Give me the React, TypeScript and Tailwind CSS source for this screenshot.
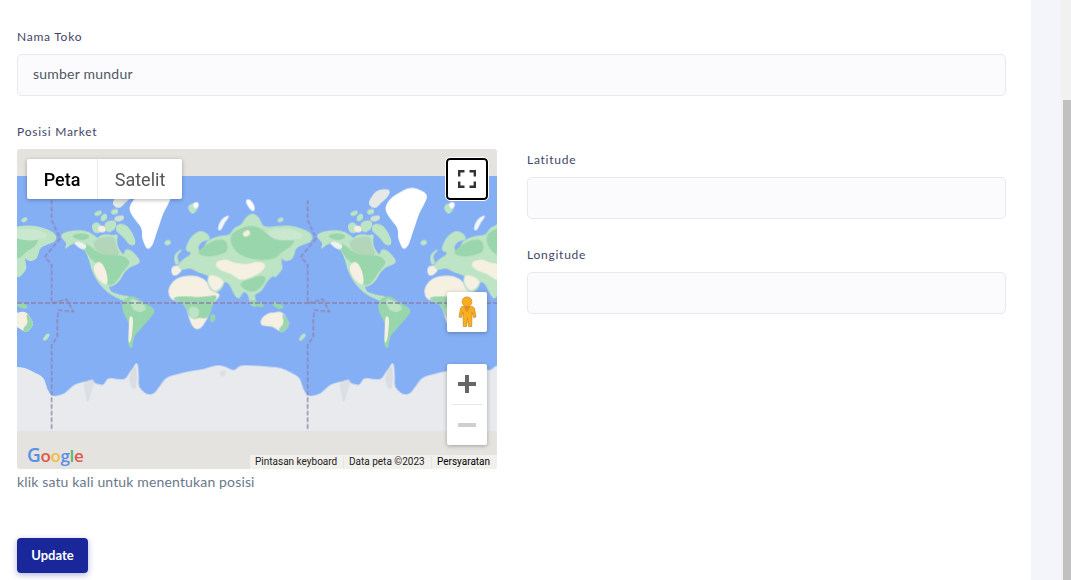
const LAND = "#bde4c5";
const FOREST = "#9ad6ab";
const SAND = "#f5f0e2";
const ICE = "#e8eaed";

// coastlines are noted on a 768 unit tile (3 units = 1 screen px), rounded by blob()
function blob(points: string) {
  const p = points.split(" ").map((s) => s.split(",").map(Number));
  const mid = (a: number[], b: number[]) => `${(a[0] + b[0]) / 2} ${(a[1] + b[1]) / 2}`;
  let d = `M${mid(p[p.length - 1], p[0])}`;
  p.forEach((pt, i) => {
    d += `Q${pt[0]} ${pt[1]} ${mid(pt, p[(i + 1) % p.length])}`;
  });
  return d + "Z";
}

type Shape = [string, string];

const AMERICAS: Shape[] = [
  [LAND, "30,178 45,170 60,166 85,164 105,166 125,176 140,190 150,178 168,176 185,180 200,176 196,192 198,212 210,232 220,238 224,220 240,224 255,240 268,258 252,266 236,272 222,284 212,300 204,314 190,326 178,330 170,332 180,350 196,354 212,360 238,362 226,374 206,368 180,354 160,338 146,322 132,300 122,276 116,250 104,222 88,208 70,200 56,206 42,218 50,202 38,190"],
  ["#b3d6bb", "128,196 160,184 190,184 192,208 206,236 178,240 150,232 132,216"],
  [FOREST, "88,206 112,206 130,226 160,240 200,238 226,246 236,262 216,280 202,306 188,322 170,328 168,296 140,262 120,248 106,224"],
  [FOREST, "60,178 100,172 118,184 84,192"],
  [SAND, "128,270 146,256 160,276 168,304 168,326 150,316 134,296"],
  ["#eff3f0", "70,200 84,198 106,208 100,220 84,214"],
  [FOREST, "196,268 226,260 226,274 204,296"],
  [LAND, "122,150 136,138 150,150 152,166 132,172"],
  [SAND, "140,152 162,150 164,166 146,168"],
  [LAND, "150,122 164,112 168,128 152,136"],
  [LAND, "130,112 148,104 152,112 136,120"],
  [LAND, "180,106 196,98 202,110 186,116"],
  [LAND, "198,148 214,144 232,154 250,186 252,206 236,206 222,186 206,172 196,164"],
  [LAND, "160,142 180,134 196,138 190,160 168,170"],
  ["#e4e9e5", "184,84 196,62 208,46 232,40 250,44 238,66 222,78 204,98"],
  ["#ffffff", "236,104 240,84 258,62 282,50 306,36 332,40 362,56 350,84 334,112 322,150 312,178 304,206 290,220 282,204 274,182 276,156 258,136"],
  ["#cfe3d4", "190,124 218,118 216,132 194,136"],
  [LAND, "340,198 354,192 360,202 346,208"],
  [FOREST, "218,374 232,364 250,362 262,372 286,386 312,402 302,418 288,434 272,452 262,464 250,476 244,494 242,518 232,504 236,470 236,440 224,420 214,396"],
  [LAND, "236,366 262,378 288,396 270,408 246,400"],
  [SAND, "237,420 245,426 243,460 238,496 234,498 235,460"],
];

const EURASIA: Shape[] = [
  [SAND, "-28,282 -24,272 -2,270 2,282 -12,296 -24,298"],
  [LAND, "-6,262 12,248 32,236 30,226 14,224 22,198 38,176 58,165 80,174 86,190 72,192 60,196 48,214 56,230 70,216 76,198 100,186 124,180 140,180 152,172 162,154 182,150 194,126 214,112 234,124 242,150 262,156 300,150 342,152 392,172 392,196 364,204 342,216 336,246 320,254 304,250 296,236 292,226 304,268 288,272 276,298 264,306 252,324 238,348 218,354 222,374 230,392 208,386 204,354 186,342 174,370 160,354 148,324 130,312 122,338 96,354 78,316 86,298 66,292 48,286 28,274 2,280 -6,274"],
  [FOREST, "48,232 74,208 104,194 134,192 140,226 110,236 78,240"],
  [FOREST, "146,180 176,160 206,150 236,156 268,186 300,176 340,180 334,208 300,226 282,248 236,250 196,244 160,222"],
  ["#c9e8cf", "254,166 300,158 350,164 372,184 330,192 280,190"],
  [SAND, "100,262 132,250 158,262 196,268 228,258 254,264 244,284 208,304 176,312 150,290 120,284"],
  [SAND, "86,298 108,302 128,316 118,334 98,346 82,316"],
  [FOREST, "176,322 204,312 244,298 254,310 238,334 214,348 190,338"],
  [SAND, "186,170 204,162 206,176 190,182"],
  [LAND, "20,92 38,82 50,88 46,104 32,114"],
  ["#ffffff", "36,84 50,78 52,92 42,96"],
  ["#f6f7f5", "112,162 116,142 128,126 146,118 128,140 120,160"],
  ["#ffffff", "194,74 206,70 220,92 218,106 206,96"],
  [LAND, "290,130 304,124 306,134 292,138"],
  [LAND, "274,290 286,280 300,264 304,276 290,296 278,304"],
  [LAND, "6,218 -16,238 -6,262 -16,266 -20,236"],
];

const SOUTH: Shape[] = [
  [SAND, "352,346 360,326 378,308 410,300 440,302 466,316 472,336 482,350 508,354 494,372 480,388 478,402 470,422 458,442 448,456 432,458 420,440 412,410 404,386 384,376 360,368"],
  [FOREST, "364,366 400,362 440,366 476,362 500,358 482,388 478,404 468,426 452,424 430,430 416,420 406,388 384,376"],
  [LAND, "412,392 444,396 440,424 420,426"],
  [SAND, "424,430 462,426 450,454 432,458"],
  [FOREST, "478,420 490,414 492,432 480,440"],
  [SAND, "630,432 642,420 656,412 672,412 682,408 696,412 706,428 714,444 702,462 692,468 676,456 660,448 632,448"],
  [FOREST, "694,412 706,428 714,444 702,462 692,468 684,460 702,442"],
  [FOREST, "596,372 620,378 642,390 622,392 604,384"],
  [FOREST, "664,378 682,382 698,392 690,398 670,392"],
  [LAND, "744,490 758,472 764,478 750,494"],
  [ICE, "-60,672 0,664 40,657 56,640 72,626 96,620 116,616 138,626 160,630 170,606 200,612 226,612 238,588 250,574 258,558 262,600 260,632 276,650 290,658 310,656 330,628 346,606 380,596 420,586 458,582 496,568 524,574 550,588 566,570 596,570 622,572 660,574 692,578 720,592 746,606 754,640 770,664 830,672 830,960 -60,960"],
  ["#dcdfe3", "100,618 132,610 120,640 110,684 104,650"],
  ["#dadde2", "234,604 256,562 256,632 244,640"],
  ["#dcdfe3", "505,590 526,582 516,604"],
];

function Shapes({ list }: { list: Shape[] }) {
  return (
    <>
      {list.map(([fill, pts]) => (
        <path key={pts} d={blob(pts)} fill={fill} stroke={fill} strokeWidth="4" strokeLinejoin="round" />
      ))}
    </>
  );
}

function WorldTile() {
  return (
    <>
      <Shapes list={AMERICAS} />
      <g transform="translate(390 0)">
        <Shapes list={EURASIA} />
      </g>
      <Shapes list={SOUTH} />
      <polyline
        points="2,72 2,132 27,187 -18,242 2,267 2,382 47,370 67,407 22,402 19,432 19,482 2,507 2,762"
        fill="none"
        stroke="#8d82ac"
        strokeWidth="4"
        strokeDasharray="14 6"
      />
    </>
  );
}

function WorldMap() {
  return (
    <svg width="480" height="320" viewBox="0 0 480 320" className="block">
      <filter id="soft">
        <feGaussianBlur stdDeviation="0.35" />
      </filter>
      <rect width="480" height="320" fill="#e4e3df" />
      <rect y="27" width="480" height="255" fill="#85aff5" />
      <svg x="0" y="27" width="480" height="255" viewBox="0 0 480 255">
        <g filter="url(#soft)">
          {[-256, 0, 256].map((dx) => (
            <g key={dx} transform={`translate(${34 + dx} 0) scale(0.3333)`}>
              <WorldTile />
            </g>
          ))}
        </g>
        <line x1="0" y1="127" x2="480" y2="127" stroke="#8d82ac" strokeWidth="1.4" strokeDasharray="5 2" />
      </svg>
    </svg>
  );
}

function Pegman() {
  return (
    <svg width="20" height="32" viewBox="0 0 20 32">
      <path
        d="M5.500 10.500h9c1.800 0 2.800 1 3.100 2.600l1.400 7.900-2.400.5-1.600-5.400-.3 14.400h-3.200l-1-8.500-1 8.500H6.300L6 16.100l-1.600 5.400-2.400-.5 1.400-7.900c.3-1.600 1-2.600 2.100-2.600z"
        fill="#f9ae1e"
        stroke="#c48a25"
        strokeWidth="0.7"
      />
      <circle cx="10" cy="5.800" r="4.900" fill="#f9ae1e" stroke="#c48a25" strokeWidth="0.7" />
      <path d="M7 11h6l-3 5.500z" fill="#ea8a2f" />
    </svg>
  );
}

function Field({ label, value }: { label: string; value?: string }) {
  return (
    <div>
      <label className="mb-[8px] block text-[12px] leading-[18px] tracking-[0.75px] text-[#3f4566]">{label}</label>
      <div className="flex h-[42px] items-center rounded-[5px] border border-[#e6e8f3] bg-[#fbfbfe] px-[15px] pb-[3px] text-[14px] tracking-[0.22px] text-[#4f5862]">
        {value}
      </div>
    </div>
  );
}

function MapBox() {
  return (
    <div className="relative h-[320px] w-[480px] overflow-hidden rounded-[3px] font-['Roboto',sans-serif]">
      <WorldMap />

      <div className="absolute top-[10px] left-[10px] flex h-[40px] rounded-[2px] bg-white text-[18px] shadow-[0_1px_4px_rgba(0,0,0,0.3)]">
        <div className="flex w-[71px] items-center justify-center border-r border-[#ebebeb] font-medium text-black">Peta</div>
        <div className="flex w-[84px] items-center justify-center text-[#565656]">Satelit</div>
      </div>

      <div className="absolute top-[9px] left-[429px] flex h-[42px] w-[42px] items-center justify-center rounded-[4px] border-[2px] border-black bg-white outline outline-1 outline-white">
        <svg width="18" height="18" viewBox="0 0 18 18" fill="none" stroke="#333" strokeWidth="2.4">
          <path d="M1.200 6.500V1.200h5.300M11.500 1.200h5.300v5.300M16.800 11.500v5.300h-5.300M6.500 16.800H1.200v-5.300" />
        </svg>
      </div>

      <div className="absolute top-[143px] left-[430px] flex h-[40px] w-[40px] items-center justify-center rounded-[2px] bg-white shadow-[0_1px_4px_rgba(0,0,0,0.3)]">
        <Pegman />
      </div>

      <div className="absolute top-[215px] left-[430px] flex h-[81px] w-[40px] flex-col items-center rounded-[2px] bg-white shadow-[0_1px_4px_rgba(0,0,0,0.3)]">
        <div className="flex h-[40px] items-center justify-center">
          <svg width="18" height="18" viewBox="0 0 18 18" fill="#666">
            <path d="M7 0h4v7h7v4h-7v7H7v-7H0V7h7z" />
          </svg>
        </div>
        <div className="h-px w-[30px] bg-[#e6e6e6]" />
        <div className="flex h-[40px] items-center justify-center">
          <svg width="18" height="4" viewBox="0 0 18 4" fill="#cfcfcf">
            <rect width="18" height="4" />
          </svg>
        </div>
      </div>

      <div className="absolute bottom-[2px] left-[10px] flex h-[24px] items-center font-['Open_Sans',sans-serif] text-[17px] leading-none font-semibold tracking-[-0.35px]">
        <span className="text-[19px] text-[#5b8fe6]">G</span>
        <span className="text-[#e3574b]">o</span>
        <span className="text-[#f3bd3d]">o</span>
        <span className="text-[#5b8fe6]">g</span>
        <span className="text-[#5db56f]">l</span>
        <span className="text-[#e3574b]">e</span>
      </div>

      <div className="absolute right-0 bottom-0 flex h-[14px] w-[247px] items-center bg-[#f1f0ec] text-[10px] leading-none text-[#222]">
        <span className="w-[93px] pl-[5px]">Pintasan keyboard</span>
        <span className="h-[12px] w-px bg-[#e6e6e6]" />
        <span className="w-[87px] pl-[5px]">Data peta ©2023</span>
        <span className="h-[12px] w-px bg-[#e6e6e6]" />
        <span className="pl-[5px] text-black">Persyaratan</span>
      </div>
    </div>
  );
}

export default function App() {
  return (
    <div className="flex h-[580px] w-[1071px] overflow-hidden bg-white font-['Lato',sans-serif]">
      <main className="w-[1031px] px-[17px] pt-[28px]">
        <div className="w-[989px]">
          <Field label="Nama Toko" value="sumber mundur" />

          <div className="mt-[27px] grid grid-cols-[480px_1fr] gap-x-[30px]">
            <div>
              <label className="mb-[8px] block text-[12px] leading-[18px] tracking-[0.75px] text-[#3f4566]">Posisi Market</label>
              <MapBox />
              <p className="mt-[4px] text-[14px] leading-[18px] tracking-[0.15px] text-[#6a7888]">klik satu kali untuk menentukan posisi</p>
            </div>
            <div className="flex flex-col gap-[27px] pt-[28px]">
              <Field label="Latitude" />
              <Field label="Longitude" />
            </div>
          </div>

          <button className="mt-[47px] flex h-[35px] w-[71px] items-center justify-center rounded-[4px] bg-[#19279a] text-[13px] font-bold text-white shadow-[0_2px_6px_rgba(25,39,154,0.35)]">
            Update
          </button>
        </div>
      </main>

      <div className="w-[30px] bg-[#f4f5fa]" />

      <div className="flex w-[10px] flex-col bg-[#f1f1f1] pl-[2px]">
        <div className="h-[100px]" />
        <div className="flex-1 bg-[#c1c1c1]" />
      </div>
    </div>
  );
}
